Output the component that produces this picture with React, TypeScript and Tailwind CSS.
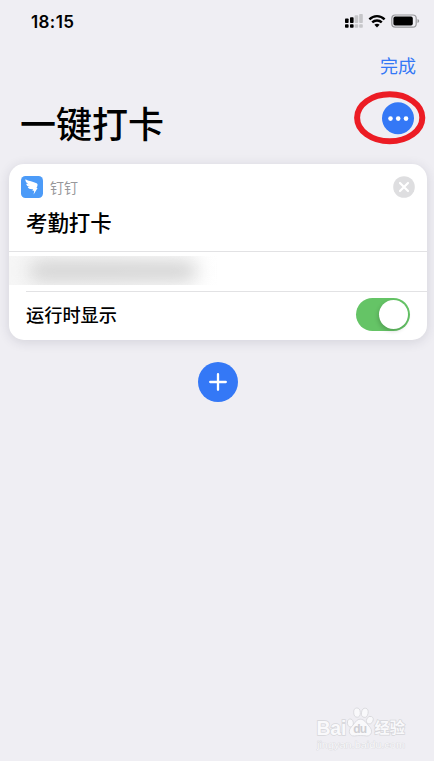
function StatusBar() {
  return (
    <div className="flex h-[42px] items-center justify-between pl-[31px] pr-[14px]">
      <span className="mt-[2px] font-['Inter'] text-[17px] leading-[20px] font-semibold tracking-[0.4px] text-black">
        18:15
      </span>

      <div className="flex items-center">
        <svg width="20" height="16" viewBox="0 0 20 16">
          <g fill="#000">
            <rect x="1" y="5.4" width="3.6" height="4.6" rx="0.8" />
            <rect x="6" y="4.2" width="3.6" height="5.8" rx="0.8" />
            <rect x="1" y="11.2" width="3.6" height="3.6" rx="0.8" />
            <rect x="6" y="11.2" width="3.6" height="3.6" rx="0.8" />
          </g>
          <g fill="#c6c6c9">
            <rect x="10.6" y="2.2" width="3.6" height="7.8" rx="0.8" />
            <rect x="15.2" y="1" width="3.6" height="9" rx="0.8" />
            <rect x="10.6" y="11.2" width="3.6" height="3.6" rx="0.8" />
            <rect x="15.2" y="11.2" width="3.6" height="3.6" rx="0.8" />
          </g>
        </svg>

        <svg className="ml-[4px]" width="18" height="14" viewBox="0 0 18 14">
          <path
            d="M1.4 5.3C5.7 1 12.3 1 16.6 5.3M4.2 8.4C6.9 5.8 11.1 5.8 13.8 8.4"
            fill="none"
            stroke="#000"
            strokeWidth="2.4"
          />
          <path d="M6.4 10.7Q9 8.7 11.6 10.7L9 13.4Z" fill="#000" />
        </svg>

        <svg className="ml-[5px]" width="29" height="14" viewBox="0 0 29 14">
          <rect
            x="0.8"
            y="1"
            width="24.4"
            height="12.2"
            rx="3.4"
            fill="none"
            stroke="#98989b"
            strokeWidth="1.2"
          />
          <rect x="2.4" y="2.6" width="19.4" height="9" rx="1.8" fill="#000" />
          <path d="M26.5 4.9Q28.2 5.5 28.2 7T26.5 9.1Z" fill="#98989b" />
        </svg>
      </div>
    </div>
  );
}

function Header() {
  return (
    <>
      <div className="flex h-[46px] items-center justify-end pr-[18px]">
        <button className="text-[18px] leading-[24px] text-[#3478f6]">
          完成
        </button>
      </div>

      <div className="flex h-[76px] items-start justify-between pl-[20px] pr-[20px]">
        <h1 className="mt-[8px] text-[36px] leading-[52px] font-medium text-black">
          一键打卡
        </h1>

        <div className="relative mt-[14px] h-8 w-8">
          <svg width="32" height="33" viewBox="0 0 32 33">
            <circle cx="16" cy="16.3" r="16" fill="#3478f6" />
            <circle cx="8.5" cy="16.6" r="2.3" fill="#fff" />
            <circle cx="16.2" cy="16.6" r="2.3" fill="#fff" />
            <circle cx="24" cy="16.6" r="2.3" fill="#fff" />
          </svg>

          <svg
            className="absolute top-[-12px] left-[-28px] max-w-none"
            width="72"
            height="55"
            viewBox="0 0 72 55"
          >
            <ellipse
              cx="35.7"
              cy="27.8"
              rx="32.6"
              ry="23.5"
              fill="none"
              stroke="#ec1c24"
              strokeWidth="6"
            />
          </svg>
        </div>
      </div>
    </>
  );
}

function DingTalkIcon() {
  return (
    <svg width="22" height="22" viewBox="0 0 22 22">
      <rect width="22" height="22" rx="4.5" fill="#4c9bf8" />
      <path
        d="M4.4 3.3C7.4 5 12.5 5.8 15.6 7.3C17.2 8.2 16.6 9.7 15.5 12.1H16.6L12.6 18.4L13.2 14.8H11.3L12.2 13.2C9 13.4 7.5 12.7 6.7 11L9 11.1C6.4 10.4 5.4 9.3 5.2 7.8L7.6 8.2C5.3 6.9 4.2 5.5 4.4 3.3Z"
        fill="#fff"
      />
    </svg>
  );
}

function ActionCard() {
  return (
    <section className="mr-[7px] ml-[9px] h-[176px] overflow-hidden rounded-[15px] bg-white shadow-[0_2px_12px_rgba(40,40,70,0.14)]">
      <div className="h-[88px] border-b border-[#e2e2e4]">
        <div className="flex h-[46px] items-center justify-between px-[12px]">
          <div className="flex items-center gap-[7px]">
            <DingTalkIcon />
            <span className="text-[14px] leading-[20px] text-[#98989b]">
              钉钉
            </span>
          </div>

          <svg width="22" height="22" viewBox="0 0 22 22">
            <circle cx="11" cy="11" r="10.8" fill="#dedee0" />
            <path
              d="M7 7L15 15M15 7L7 15"
              stroke="#fff"
              strokeWidth="2.2"
              strokeLinecap="round"
            />
          </svg>
        </div>

        <h2 className="-mt-px pl-[17px] text-[21.4px] leading-[26px] font-medium text-black">
          考勤打卡
        </h2>
      </div>

      <div className="h-[39px] pt-[4px]">
        <div className="h-[29px] w-[210px] overflow-hidden bg-gradient-to-r from-[#f6f6f6] via-[#f8f8f8] to-white pt-[5px] pl-[20px]">
          <div className="h-[20px] w-[168px] rounded-full bg-[#d2d2d2] blur-[9px]" />
        </div>
      </div>

      <div className="ml-[17px] flex h-[49px] items-start justify-between border-t border-[#e2e2e4] pt-[6px] pr-[17px]">
        <span className="mt-[4px] text-[18.2px] leading-[24px] font-medium text-black">
          运行时显示
        </span>

        <div className="flex h-[33px] w-[54px] items-center justify-end rounded-full bg-[#65c466] pr-[2px]">
          <div className="h-[29px] w-[29px] rounded-full bg-white shadow-[-1px_2px_4px_rgba(0,0,0,0.18)]" />
        </div>
      </div>
    </section>
  );
}

function Watermark() {
  return (
    <div className="absolute top-[706px] left-[316px]">
      <svg width="92" height="46" viewBox="0 0 92 46">
        <g fill="#f9f9fb" stroke="#d6d6da" strokeWidth="0.8">
          <ellipse cx="34.4" cy="17" rx="3" ry="4" transform="rotate(-12 34.4 17)" />
          <ellipse cx="41" cy="6.6" rx="3.3" ry="4.6" transform="rotate(-4 41 6.6)" />
          <ellipse cx="48.8" cy="6.8" rx="3.3" ry="4.6" transform="rotate(10 48.8 6.8)" />
          <ellipse cx="53.8" cy="14.2" rx="3.2" ry="4" transform="rotate(25 53.8 14.2)" />
          <path d="M44.4 13.2C48.4 13.2 50 17 53 20C57.6 24.6 55.3 30.2 50.8 30C46.8 29.4 42.4 29.4 38.4 30C33.4 30.2 31.2 25 35.8 20.4C39 17.2 40.2 13.2 44.4 13.2Z" />
        </g>
        <g
          fill="#f9f9fb"
          stroke="#d6d6da"
          strokeWidth="1.4"
          paintOrder="stroke"
          fontFamily="Liberation Sans, Noto Sans CJK SC, sans-serif"
        >
          <text x="0.4" y="28.5" fontSize="19.5" fontWeight="bold" textLength="30">
            Bai
          </text>
          <text x="58.5" y="27.4" fontSize="15.2" fontWeight="bold" textLength="30.5">
            经验
          </text>
          <text
            x="1"
            y="41.8"
            fontSize="9.5"
            strokeWidth="0.7"
            textLength="88"
            lengthAdjust="spacingAndGlyphs"
          >
            jingyan.baidu.com
          </text>
        </g>
        <text
          x="37.2"
          y="26.6"
          fontSize="12"
          fontWeight="bold"
          fontFamily="Liberation Sans, sans-serif"
          fill="#cfcfd3"
          textLength="14"
        >
          du
        </text>
      </svg>
    </div>
  );
}

export default function App() {
  return (
    <main className="relative h-[761px] w-[434px] overflow-hidden bg-[#efeef3] font-['Noto_Sans_CJK_SC',sans-serif]">
      <StatusBar />
      <Header />
      <ActionCard />

      <div className="mt-[22px] ml-[198px] flex h-[40px] w-[40px] items-center justify-center rounded-full bg-[#3478f6]">
        <svg width="18" height="18" viewBox="0 0 18 18">
          <path
            d="M9 1.2V16.8M1.2 9H16.8"
            stroke="#fff"
            strokeWidth="2.3"
            strokeLinecap="round"
          />
        </svg>
      </div>

      <Watermark />
    </main>
  );
}
